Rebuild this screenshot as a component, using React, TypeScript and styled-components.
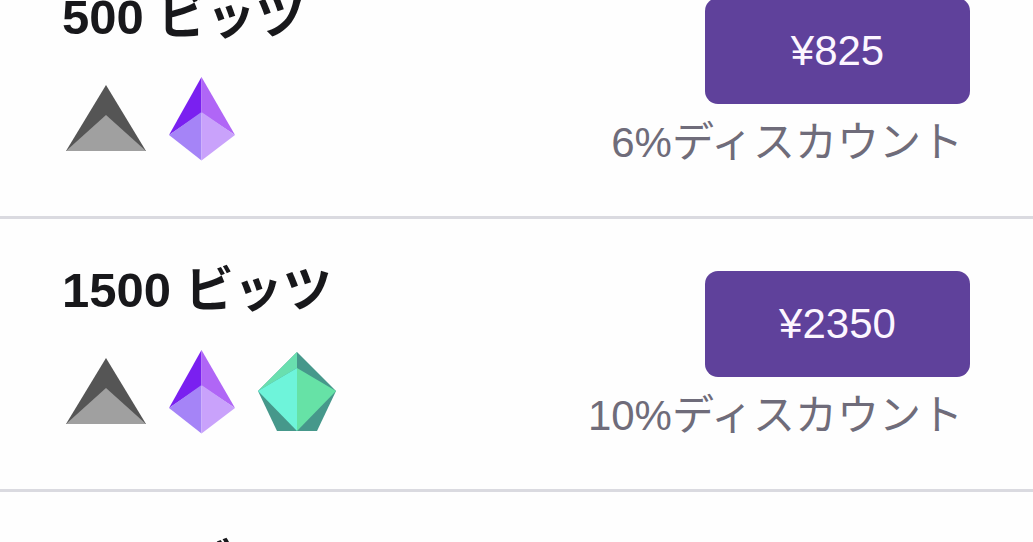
import React from "react";
import styled, { createGlobalStyle } from "styled-components";

const GlobalStyle = createGlobalStyle`
  *, *::before, *::after { box-sizing: border-box; }
  body {
    margin: 0;
    background: #fefefe;
    color: #18181b;
    font-family: "Liberation Sans", "Noto Sans CJK JP", sans-serif;
  }
`;

const Viewport = styled.main`
  height: 100vh;
  overflow: hidden;
`;

/* The list is scrolled part of the way into its first offer. */
const OfferList = styled.ul`
  list-style: none;
  margin: -54px 0 0;
  padding: 0;
`;

const Offer = styled.li`
  display: flex;
  justify-content: space-between;
  align-items: flex-start;
  min-height: 273px;
  padding: 0 63px 0 62px;
  border-bottom: 3px solid #dadae0;
`;

const Summary = styled.div`
  padding-top: 43px;
`;

const Title = styled.h2`
  margin: 0 0 32px;
  font-size: 49px;
  line-height: 56px;
  font-weight: 700;
  white-space: nowrap;
`;

const Gems = styled.div`
  display: flex;
  gap: 23px;

  svg { display: block; }
`;

const Purchase = styled.div`
  display: flex;
  flex-direction: column;
  align-items: flex-end;
  padding-top: 52px;
`;

const BuyButton = styled.button`
  width: 265px;
  height: 106px;
  padding: 0;
  border: 0;
  border-radius: 13px;
  background: #5f419b;
  color: #fcf6ff;
  font: inherit;
  font-size: 42px;
  line-height: 56px;
  cursor: pointer;
`;

const Discount = styled.p`
  margin: 11px 7px 0 0;
  color: #6f6c7a;
  font-size: 42px;
  line-height: 56px;
  white-space: nowrap;
`;

type GemKind = "gray" | "purple" | "green";

function Gem({ kind }: { kind: GemKind }) {
  if (kind === "gray") {
    return (
      <svg width="84" height="84" viewBox="0 0 84 84" aria-hidden="true">
        <path d="M44 8 84 74H4Z" fill="#555" />
        <path d="M44 38 84 74H4Z" fill="#a0a0a0" />
      </svg>
    );
  }
  if (kind === "purple") {
    return (
      <svg width="66" height="84" viewBox="0 0 66 84" aria-hidden="true">
        <path d="M32.5 0V36L0 58Z" fill="#7a20f0" />
        <path d="M32.5 0 66 58 32.5 36Z" fill="#b066f6" />
        <path d="M32.5 35V83.500L0 58Z" fill="#a584f7" />
        <path d="M32.5 35 66 58 32.5 83.500Z" fill="#c9a2fb" />
      </svg>
    );
  }
  return (
    <svg width="78" height="84" viewBox="0 0 78 84" aria-hidden="true">
      <path d="M39 2 78 41 59 81H19L0 41Z" fill="#46988b" />
      <path d="M39 2V18L0 41Z" fill="#69dfaf" />
      <path d="M39 18V81L0 41Z" fill="#6ef4da" />
      <path d="M39 18 78 41 39 81Z" fill="#66e2a6" />
    </svg>
  );
}

const offers: { bits: number; price: number; discount: number; gems: GemKind[] }[] = [
  { bits: 500, price: 825, discount: 6, gems: ["gray", "purple"] },
  { bits: 1500, price: 2350, discount: 10, gems: ["gray", "purple", "green"] },
];

export default function App() {
  return (
    <>
      <GlobalStyle />
      <Viewport>
        <OfferList>
          {offers.map((offer) => (
            <Offer key={offer.bits}>
              <Summary>
                <Title>{offer.bits} ビッツ</Title>
                <Gems>
                  {offer.gems.map((kind) => (
                    <Gem key={kind} kind={kind} />
                  ))}
                </Gems>
              </Summary>
              <Purchase>
                <BuyButton type="button">¥{offer.price}</BuyButton>
                <Discount>{offer.discount}%ディスカウント</Discount>
              </Purchase>
            </Offer>
          ))}
          <Offer>
            <Summary>
              <Title>5000 ビッツ</Title>
            </Summary>
          </Offer>
        </OfferList>
      </Viewport>
    </>
  );
}
